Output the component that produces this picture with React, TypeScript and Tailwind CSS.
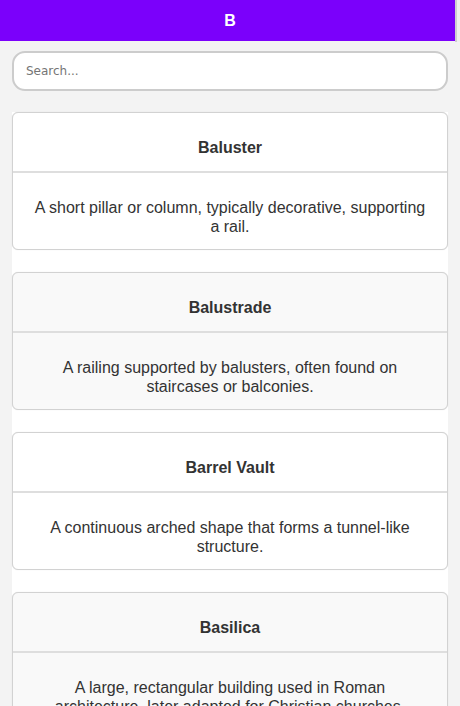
const terms = [
  {
    title: "Baluster",
    text: "A short pillar or column, typically decorative, supporting a rail.",
  },
  {
    title: "Balustrade",
    text: "A railing supported by balusters, often found on staircases or balconies.",
  },
  {
    title: "Barrel Vault",
    text: "A continuous arched shape that forms a tunnel-like structure.",
  },
  {
    title: "Basilica",
    text: "A large, rectangular building used in Roman architecture, later adapted for Christian churches.",
  },
  {
    title: "Bay",
    text: "A compartment or division of a building, marked by columns or piers.",
  },
];

function TermCard({ title, text, shaded }: { title: string; text: string; shaded: boolean }) {
  return (
    <div
      className={
        shaded
          ? "rounded-[6px] border border-[#d2d2d2] bg-[#f9f9f9] shadow-[0_0_1px_rgba(0,0,0,0.15)]"
          : "rounded-[6px] border border-[#d2d2d2] bg-white shadow-[0_0_1px_rgba(0,0,0,0.15)]"
      }
    >
      <div className="border-b-2 border-[#dedede] px-5 pb-[14px] pt-[26px] text-center">
        <h3 className="text-[16px] font-bold leading-[18px] text-[#333]">{title}</h3>
      </div>
      <div className="h-[76px] px-5 pt-[25px] text-center">
        <p className="text-[16px] leading-[19px] text-[#333]">{text}</p>
      </div>
    </div>
  );
}

export default function App() {
  return (
    <div
      className="relative h-[706px] overflow-hidden bg-[#f3f3f3]"
      style={{ fontFamily: '"Liberation Sans", Arial, sans-serif' }}
    >
      <header className="flex h-[41px] items-center justify-center bg-[#7b00fb]">
        <h1 className="text-[16px] font-bold text-white">B</h1>
      </header>

      <div className="px-3 pt-[10px]">
        <input
          type="text"
          placeholder="Search..."
          className="h-[40px] w-full rounded-[13px] border-2 border-[#cccccc] bg-white px-[12px] text-[12px] text-[#333] outline-none placeholder:text-[#757575]"
          style={{ fontFamily: '"DejaVu Sans", sans-serif' }}
        />
      </div>

      <div className="mx-3 mt-[21px] flex flex-col gap-[22px] bg-white">
        {terms.map((t, i) => (
          <TermCard key={t.title} title={t.title} text={t.text} shaded={i % 2 === 1} />
        ))}
      </div>

      {/* overlay scrollbar thumb */}
      <div className="absolute right-0 top-0 flex h-[42px] w-[5px]">
        <span className="w-[2px] bg-[#cfcfcf]" />
        <span className="w-[3px] bg-[#efefef]" />
      </div>
    </div>
  );
}
